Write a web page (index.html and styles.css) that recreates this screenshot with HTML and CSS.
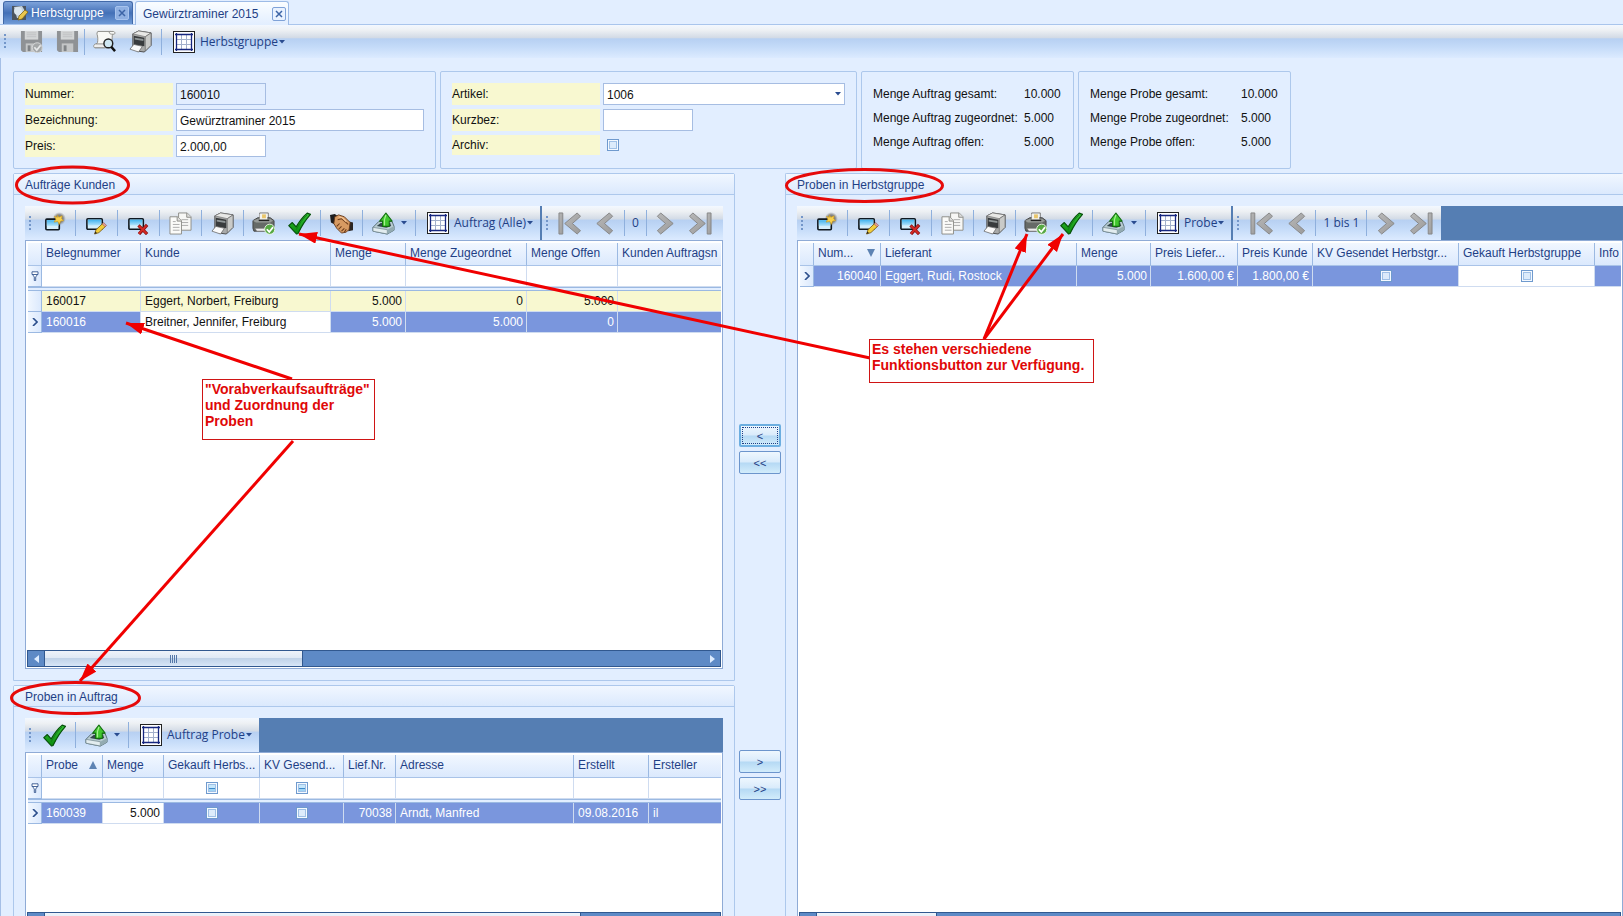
FILE: index.html
```html
<!DOCTYPE html>
<html lang="de">
<head>
<meta charset="utf-8">
<title>Herbstgruppe</title>
<link rel="stylesheet" href="styles.css">
</head>
<body>
<svg class="sprite" aria-hidden="true">
  <defs>
    <linearGradient id="gGreen" x1="0" y1="0" x2="0" y2="1"><stop offset="0" stop-color="#35c435"/><stop offset="1" stop-color="#0a8a0e"/></linearGradient>
    <linearGradient id="gWin" x1="0" y1="0" x2="0" y2="1"><stop offset="0" stop-color="#3fb2ee"/><stop offset="1" stop-color="#b4e4fb"/></linearGradient>
    <linearGradient id="gGrey" x1="0" y1="0" x2="1" y2="1"><stop offset="0" stop-color="#b8b8b8"/><stop offset="1" stop-color="#9b9b9b"/></linearGradient>
    <radialGradient id="gGlow"><stop offset="0" stop-color="#555"/><stop offset=".6" stop-color="#777" stop-opacity=".8"/><stop offset="1" stop-color="#999" stop-opacity="0"/></radialGradient>
    <marker id="head" markerUnits="userSpaceOnUse" markerWidth="20" markerHeight="14" refX="18" refY="6" orient="auto"><path d="M0 0L18 6L0 12Z" fill="#f00000"/></marker>
  </defs>
  <symbol id="i-new" viewBox="0 0 24 24"><circle cx="17" cy="7" r="7" fill="url(#gGlow)"/><rect x="3" y="7.500" width="14" height="11" rx="1" fill="#d4effc" stroke="#101820" stroke-width="1.700"/><path d="M4 8.500h12v6H4z" fill="url(#gWin)"/><path d="M15 3l1.500 2.500L20 4l-.5 3 2 2-3 .5L17 13l-1.500-3-4 .500 2-3-1.500-3 3 1z" fill="#f7d04d" stroke="#c99a26" stroke-width=".7"/></symbol>
  <symbol id="i-edit" viewBox="0 0 24 24"><rect x="2" y="7" width="16" height="11" rx="1" fill="#d4effc" stroke="#101820" stroke-width="1.700"/><path d="M3 8h14v6H3z" fill="url(#gWin)"/><path d="M10 23l1.500-4.500 7.500-7 3 3-7.500 7z" fill="#f2ce3a" stroke="#7c5b10" stroke-width=".9"/><path d="M18 12.500l1.500-1.500 3 3-1.500 1.500z" fill="#e0a09a" stroke="#844" stroke-width=".5"/><path d="M10 23l.8-2.600 1.700 1.600z" fill="#222"/></symbol>
  <symbol id="i-del" viewBox="0 0 24 24"><rect x="2" y="7" width="15" height="11" rx="1" fill="#d4effc" stroke="#101820" stroke-width="1.700"/><path d="M3 8h13v6H3z" fill="url(#gWin)"/><path d="M12 14l9 9M21 13.500l-8.500 9.500" stroke="#8a1111" stroke-width="3.400"/><path d="M12.500 14.500l8 8M20.500 14l-8 8.500" stroke="#d42a25" stroke-width="2"/></symbol>
  <symbol id="i-copy" viewBox="0 0 24 24"><path d="M10 1h9l4 4v14H10z" fill="#f7f7f5" stroke="#8d8d88"/><path d="M18.500 1v4.500H23" fill="#ddd" stroke="#8d8d88"/><path d="M13 8h7M13 11h7M13 14h7" stroke="#aaa"/><path d="M1 5h8l4 4v14H1z" fill="#fbfbf9" stroke="#8d8d88"/><path d="M8.500 5v4.500H13" fill="#ddd" stroke="#8d8d88"/><path d="M4 10h3M4 13h7M4 16h7M4 19h7" stroke="#aaa"/></symbol>
  <symbol id="i-print" viewBox="0 0 24 24"><path d="M4 4l6-3 13 2v13l-7 7-7-1-5-3z" fill="#a9aaa9" stroke="#4a4a4a"/><path d="M4 4l6-3 13 2-6 4z" fill="#e8e8e6" stroke="#777" stroke-width=".7"/><path d="M17 7l6-4v13l-6 6z" fill="#c9cac8" stroke="#666" stroke-width=".7"/><path d="M5 6l11 2v9L5 15z" fill="#383b3d"/><path d="M6 8l9 1.500v2L6 10z" fill="#8f9697"/><path d="M5 15l9 2-4 6-9-3z" fill="#fafafa" stroke="#666" stroke-width=".8"/></symbol>
  <symbol id="i-pcheck" viewBox="0 0 24 24"><path d="M8 1h9v9H8z" fill="#f3f3ee" stroke="#777"/><path d="M10.500 2.500h4v4h-4z" fill="#e9c66b"/><path d="M1 9l5-3h13l4 3v9l-6 2H2l-1-3z" fill="#666a67" stroke="#444"/><path d="M1 9l5-2h13l3 2-3 2H4z" fill="#979b98"/><path d="M8 2h8v6H8z" fill="#f3f3ee"/><path d="M10.500 2.500h4v4h-4z" fill="#e9c66b"/><path d="M7 8h11v1.500H7z" fill="#222"/><path d="M3 17h13l-2 3H5z" fill="#ededed" stroke="#666" stroke-width=".6"/><circle cx="18.500" cy="18" r="5.300" fill="#57a844" stroke="#e8f5e3"/><path d="M15.500 18l2.500 2.800 4-5" fill="none" stroke="#fff" stroke-width="1.800"/></symbol>
  <symbol id="i-check" viewBox="0 0 24 24"><path d="M.8 14.200L4.500 11l4 4.500C12 9.500 15.500 5 20 1.200l3.500 1.300C18.500 8 14 15 10.500 22.500L9 23Z" fill="url(#gGreen)" stroke="#06500a" stroke-width="1.200" stroke-linejoin="round"/><path d="M8.500 18.500C12 12 15.500 7 20 3" fill="none" stroke="#0d7012" stroke-width=".8"/></symbol>
  <symbol id="i-hand" viewBox="0 0 24 24"><path d="M0 3l5-1 4 3-4 8-4-2z" fill="#1c1c1e"/><path d="M20 10l4 1v8l-5 1z" fill="#2b2523"/><path d="M5 5l4-2 6 2 6 6-1 7-3 3-5 1-5-5-3-5z" fill="#d79a62" stroke="#5f3416" stroke-width=".9"/><path d="M8 8l4-1 7 6M7 15l3-3M9 18l3-3M12 20l3-3M15 21l2-3" fill="none" stroke="#6b3a18" stroke-width="1.100"/><path d="M9 5l4 1 4 4" stroke="#f4c698" fill="none" stroke-width="1.300"/></symbol>
  <symbol id="i-export" viewBox="0 0 24 24"><path d="M1 16l6-6h14l2 5v4l-7 4-15-3z" fill="#b9ccd2" stroke="#556c73"/><path d="M1 16l15 2.500V23L1 20z" fill="#e2ecef" stroke="#6b8189" stroke-width=".7"/><path d="M16 18.500l7-4V19l-7 4z" fill="#93abb2"/><path d="M5 14.500l4-3h10l1 3-5 2z" fill="#33464c"/><path d="M11 15V9.500H8L14.500 1 21 9.500h-3V15z" fill="#40c62e" stroke="#136c10" stroke-width="1.100" stroke-linejoin="round"/><path d="M13 14V8l1.500-5" stroke="#a4f08e" fill="none" stroke-width="1.300"/></symbol>
  <symbol id="i-grid" viewBox="0 0 22 22"><rect x=".5" y=".5" width="21" height="21" fill="#fff" stroke="#222"/><path d="M8.500 3v16M13.500 3v16M3 8.500h16M3 13.500h16" stroke="#a3b0cb"/><path d="M3.500 2v18M18.500 2v18M2 3.500h18M2 18.500h18" stroke="#16267f" stroke-width="1.300"/></symbol>
  <symbol id="i-preview" viewBox="0 0 24 24"><path d="M5 1.500h16c2 0 3 3 0 3-1 0-1 2-1 5v9H2c-2 0-1.500-4 1-4 2 0 2-2 2-6C5 5 3 4 5 1.500z" fill="#f8f8f5" stroke="#8c8c88"/><path d="M18 1.500c-2 1-1 3 3 3" fill="none" stroke="#8c8c88"/><path d="M2 18.500h10c2-1 1-4-1-4H3" fill="#eee" stroke="#8c8c88"/><circle cx="16" cy="14" r="4.600" fill="#cfe7f2" stroke="#222" stroke-width="1.500"/><path d="M19 17.500l4 4.500" stroke="#111" stroke-width="2.600"/></symbol>
  <symbol id="i-save" viewBox="0 0 24 24"><path d="M1 1h22v22H3l-2-2z" fill="#8f9295"/><path d="M5 1h14v9H5z" fill="#d4d6d7"/><path d="M7 3h10M7 5h10M7 7h10" stroke="#bfc1c2"/><path d="M6 14h12v9H6z" fill="#c4c6c7"/><path d="M8 16h3v6H8z" fill="#808386"/></symbol>
  <symbol id="i-scheck" viewBox="0 0 24 24"><use href="#i-save"/><circle cx="18" cy="18.500" r="5.200" fill="#a4a7a8" stroke="#d5d7d8"/><path d="M15 18l2.500 3 4-5" fill="none" stroke="#e6e8e9" stroke-width="1.700"/></symbol>
  <symbol id="i-first" viewBox="0 0 24 24"><g fill="url(#gGrey)" stroke="#868686" stroke-linejoin="round"><path d="M1 1h4v22H1z"/><path d="M20 1l3.500 3.500L15 12l8.500 7.500L20 23 7 12z"/></g></symbol>
  <symbol id="i-prev" viewBox="0 0 24 24"><path d="M17 1l3.500 3.500L12 12l8.500 7.500L17 23 4 12z" fill="url(#gGrey)" stroke="#868686" stroke-linejoin="round"/></symbol>
  <symbol id="i-next" viewBox="0 0 24 24"><path d="M7 1L3.500 4.500 12 12l-8.500 7.500L7 23l13-11z" fill="url(#gGrey)" stroke="#868686" stroke-linejoin="round"/></symbol>
  <symbol id="i-last" viewBox="0 0 24 24"><g fill="url(#gGrey)" stroke="#868686" stroke-linejoin="round"><path d="M19 1h4v22h-4z"/><path d="M4 1L.5 4.500 9 12 .5 19.500 4 23l13-11z"/></g></symbol>
  <symbol id="i-funnel" viewBox="0 0 8 10"><path d="M1 .8h6v2.700H1zM1.500 3.500L3.300 6v3.500h1.400V6l1.800-2.500" fill="#fff" stroke="#34568f" stroke-width=".9"/></symbol>
  <symbol id="i-caret" viewBox="0 0 6 4"><path d="M0 0h6L3 3.500z" fill="#2a4c90"/></symbol>
  <symbol id="i-row" viewBox="0 0 6 8"><path d="M1 0l4 4-4 4" fill="none" stroke="#2c4f8c" stroke-width="1.600"/></symbol>
  <symbol id="i-x" viewBox="0 0 8 8"><path d="M1 1l6 6M7 1L1 7" stroke="#3c64a6" stroke-width="1.500"/></symbol>
  <symbol id="i-doc" viewBox="0 0 16 16"><path d="M0 1h14v14H0z" fill="#4b5560"/><path d="M2 2l8-1 3 5-2 7H5z" fill="#c5d2dc"/><circle cx="6" cy="6" r="4" fill="#dce7ee"/><path d="M6 15l1-4 6-6 3 2-6 7z" fill="#eac64d" stroke="#806515" stroke-width=".8"/></symbol>
</svg>

<div class="page">
  <nav class="tabs">
    <div class="tab tab-dark"><svg class="tab-icon"><use href="#i-doc"/></svg><span>Herbstgruppe</span><button class="close" aria-label="Herbstgruppe schließen"><svg><use href="#i-x"/></svg></button></div>
    <div class="tab tab-light"><span>Gewürztraminer 2015</span><button class="close" aria-label="Gewürztraminer schließen"><svg><use href="#i-x"/></svg></button></div>
  </nav>
  <div class="toolbar toolbar-main">
    <i class="grip"></i>
    <button class="tool tool-near" aria-label="Speichern und schließen"><svg class="icon"><use href="#i-scheck"/></svg></button>
    <button class="tool tool-near" aria-label="Speichern"><svg class="icon"><use href="#i-save"/></svg></button>
    <i class="sep"></i>
    <button class="tool tool-near" aria-label="Vorschau"><svg class="icon"><use href="#i-preview"/></svg></button>
    <button class="tool tool-check" aria-label="Drucken"><svg class="icon"><use href="#i-print"/></svg></button>
    <i class="sep"></i>
    <button class="tool tool-text"><svg class="icon-grid"><use href="#i-grid"/></svg><span>Herbstgruppe</span><svg class="caret"><use href="#i-caret"/></svg></button>
  </div>

  <main class="content">
    <div class="groups">
      <section class="group form-group group-first">
        <div class="field"><label for="nummer">Nummer:</label><input id="nummer" class="short readonly" value="160010" readonly></div>
        <div class="field"><label for="bez">Bezeichnung:</label><input id="bez" class="long" value="Gewürztraminer 2015"></div>
        <div class="field"><label for="preis">Preis:</label><input id="preis" class="short" value="2.000,00"></div>
      </section>
      <section class="group form-group group-second">
        <div class="field"><label for="artikel">Artikel:</label><div class="combo"><select id="artikel"><option>1006</option></select><svg class="caret"><use href="#i-caret"/></svg></div></div>
        <div class="field"><label for="kurz">Kurzbez:</label><input id="kurz" class="short"></div>
        <div class="field field-check"><label for="archiv">Archiv:</label><input id="archiv" type="checkbox" class="check"></div>
      </section>
      <section class="group sums">
        <span>Menge Auftrag gesamt:</span><span>10.000</span>
        <span>Menge Auftrag zugeordnet:</span><span>5.000</span>
        <span>Menge Auftrag offen:</span><span>5.000</span>
      </section>
      <section class="group sums">
        <span>Menge Probe gesamt:</span><span>10.000</span>
        <span>Menge Probe zugeordnet:</span><span>5.000</span>
        <span>Menge Probe offen:</span><span>5.000</span>
      </section>
    </div>

    <div class="workspace">
      <div class="column">
        <section class="panel upper">
          <h2>Aufträge Kunden</h2>
          <div class="panel-body">
            <div class="toolbar-row">
              <div class="toolbar">
                <i class="grip"></i>
                <button class="tool" aria-label="Neu"><svg class="icon"><use href="#i-new"/></svg></button><i class="sep"></i>
                <button class="tool" aria-label="Bearbeiten"><svg class="icon"><use href="#i-edit"/></svg></button><i class="sep"></i>
                <button class="tool" aria-label="Löschen"><svg class="icon"><use href="#i-del"/></svg></button><i class="sep"></i>
                <button class="tool" aria-label="Kopieren"><svg class="icon"><use href="#i-copy"/></svg></button><i class="sep"></i>
                <button class="tool" aria-label="Drucken"><svg class="icon"><use href="#i-print"/></svg></button><i class="sep"></i>
                <button class="tool tool-near" aria-label="Druck bestätigen"><svg class="icon"><use href="#i-pcheck"/></svg></button>
                <button class="tool tool-check" aria-label="Bestätigen"><svg class="icon"><use href="#i-check"/></svg></button><i class="sep"></i>
                <button class="tool" aria-label="Vereinbaren"><svg class="icon"><use href="#i-hand"/></svg></button><i class="sep"></i>
                <button class="tool tool-drop" aria-label="Exportieren"><svg class="icon"><use href="#i-export"/></svg><svg class="caret"><use href="#i-caret"/></svg></button><i class="sep"></i>
                <button class="tool tool-text"><svg class="icon-grid"><use href="#i-grid"/></svg><span>Auftrag (Alle)</span><svg class="caret"><use href="#i-caret"/></svg></button>
              </div>
              <div class="toolbar pager stretch">
                <i class="grip"></i>
                <button class="tool tool-end" aria-label="Anfang"><svg class="icon"><use href="#i-first"/></svg></button>
                <button class="tool tool-step" aria-label="Zurück"><svg class="icon"><use href="#i-prev"/></svg></button>
                <i class="sep"></i><span class="pos">0</span><i class="sep"></i>
                <button class="tool tool-step" aria-label="Weiter"><svg class="icon"><use href="#i-next"/></svg></button>
                <button class="tool tool-end" aria-label="Ende"><svg class="icon"><use href="#i-last"/></svg></button>
              </div>
            </div>
            <div class="grid">
              <table>
                <colgroup><col class="w14"><col class="w99"><col class="w190"><col class="w75"><col class="w121"><col class="w91"><col></colgroup>
                <thead><tr><th></th><th>Belegnummer</th><th>Kunde</th><th>Menge</th><th>Menge Zugeordnet</th><th>Menge Offen</th><th>Kunden Auftragsn</th></tr></thead>
                <tbody>
                  <tr class="filter"><td class="ind"><svg class="funnel"><use href="#i-funnel"/></svg></td><td></td><td></td><td></td><td></td><td></td><td></td></tr>
                  <tr class="split"><td colspan="7"></td></tr>
                  <tr class="even"><td class="ind"></td><td>160017</td><td>Eggert, Norbert, Freiburg</td><td class="num">5.000</td><td class="num">0</td><td class="num">5.000</td><td></td></tr>
                  <tr class="sel"><td class="ind"><svg class="rowmark"><use href="#i-row"/></svg></td><td>160016</td><td class="focus">Breitner, Jennifer, Freiburg</td><td class="num">5.000</td><td class="num">5.000</td><td class="num">0</td><td></td></tr>
                </tbody>
              </table>
              <div class="scroll"><span class="sb sb-left"></span><span class="thumb thumb-a"><i></i></span><span class="sb sb-right"></span></div>
            </div>
          </div>
        </section>

        <section class="panel lower">
          <h2>Proben in Auftrag</h2>
          <div class="panel-body">
            <div class="toolbar-row">
              <div class="toolbar">
                <i class="grip"></i>
                <button class="tool" aria-label="Bestätigen"><svg class="icon"><use href="#i-check"/></svg></button><i class="sep"></i>
                <button class="tool tool-drop" aria-label="Exportieren"><svg class="icon"><use href="#i-export"/></svg><svg class="caret"><use href="#i-caret"/></svg></button><i class="sep"></i>
                <button class="tool tool-text"><svg class="icon-grid"><use href="#i-grid"/></svg><span>Auftrag Probe</span><svg class="caret"><use href="#i-caret"/></svg></button>
              </div>
            </div>
            <div class="grid">
              <table>
                <colgroup><col class="w14"><col class="w61"><col class="w61"><col class="w96"><col class="w84"><col class="w52"><col class="w178"><col class="w75"><col></colgroup>
                <thead><tr><th></th><th><span class="sort">Probe<svg><path d="M0 8L4 0l4 8z"/></svg></span></th><th>Menge</th><th>Gekauft Herbs...</th><th>KV Gesend...</th><th>Lief.Nr.</th><th>Adresse</th><th>Erstellt</th><th>Ersteller</th></tr></thead>
                <tbody>
                  <tr class="filter"><td class="ind"><svg class="funnel"><use href="#i-funnel"/></svg></td><td></td><td></td><td class="mid"><input type="checkbox" class="check mixed" aria-label="Filter Gekauft"></td><td class="mid"><input type="checkbox" class="check mixed" aria-label="Filter KV Gesendet"></td><td></td><td></td><td></td><td></td></tr>
                  <tr class="split"><td colspan="9"></td></tr>
                  <tr class="sel"><td class="ind"><svg class="rowmark"><use href="#i-row"/></svg></td><td>160039</td><td class="num focus">5.000</td><td class="mid"><input type="checkbox" class="check" aria-label="Gekauft"></td><td class="mid"><input type="checkbox" class="check" aria-label="KV Gesendet"></td><td class="num">70038</td><td>Arndt, Manfred</td><td>09.08.2016</td><td>il</td></tr>
                </tbody>
              </table>
              <div class="scroll"><span class="sb sb-left"></span><span class="thumb thumb-b"><i></i></span><span class="sb sb-right"></span></div>
            </div>
          </div>
        </section>
      </div>

      <div class="column">
        <div class="move-group upper"><button class="move active">&lt;</button><button class="move">&lt;&lt;</button></div>
        <div class="move-group lower"><button class="move">&gt;</button><button class="move">&gt;&gt;</button></div>
      </div>

      <section class="panel panel-right">
        <h2>Proben in Herbstgruppe</h2>
        <div class="panel-body">
          <div class="toolbar-row">
            <div class="toolbar">
              <i class="grip"></i>
              <button class="tool" aria-label="Neu"><svg class="icon"><use href="#i-new"/></svg></button><i class="sep"></i>
              <button class="tool" aria-label="Bearbeiten"><svg class="icon"><use href="#i-edit"/></svg></button><i class="sep"></i>
              <button class="tool" aria-label="Löschen"><svg class="icon"><use href="#i-del"/></svg></button><i class="sep"></i>
              <button class="tool" aria-label="Kopieren"><svg class="icon"><use href="#i-copy"/></svg></button><i class="sep"></i>
              <button class="tool" aria-label="Drucken"><svg class="icon"><use href="#i-print"/></svg></button><i class="sep"></i>
              <button class="tool tool-near" aria-label="Druck bestätigen"><svg class="icon"><use href="#i-pcheck"/></svg></button>
              <button class="tool tool-check" aria-label="Bestätigen"><svg class="icon"><use href="#i-check"/></svg></button><i class="sep"></i>
              <button class="tool tool-drop" aria-label="Exportieren"><svg class="icon"><use href="#i-export"/></svg><svg class="caret"><use href="#i-caret"/></svg></button><i class="sep"></i>
              <button class="tool tool-text"><svg class="icon-grid"><use href="#i-grid"/></svg><span>Probe</span><svg class="caret"><use href="#i-caret"/></svg></button>
            </div>
            <div class="toolbar pager">
              <i class="grip"></i>
              <button class="tool tool-end" aria-label="Anfang"><svg class="icon"><use href="#i-first"/></svg></button>
              <button class="tool tool-step" aria-label="Zurück"><svg class="icon"><use href="#i-prev"/></svg></button>
              <i class="sep"></i><span class="pos">1 bis 1</span><i class="sep"></i>
              <button class="tool tool-step" aria-label="Weiter"><svg class="icon"><use href="#i-next"/></svg></button>
              <button class="tool tool-end" aria-label="Ende"><svg class="icon"><use href="#i-last"/></svg></button>
            </div>
          </div>
          <div class="grid">
            <table>
              <colgroup><col class="w14"><col class="w67"><col class="w196"><col class="w74"><col class="w87"><col class="w75"><col class="w146"><col class="w136"><col></colgroup>
              <thead><tr><th></th><th><span class="sort">Num...<svg><path d="M0 0h8L4 8z"/></svg></span></th><th>Lieferant</th><th>Menge</th><th>Preis Liefer...</th><th>Preis Kunde</th><th>KV Gesendet Herbstgr...</th><th>Gekauft Herbstgruppe</th><th>Info</th></tr></thead>
              <tbody>
                <tr class="sel"><td class="ind"><svg class="rowmark"><use href="#i-row"/></svg></td><td class="num">160040</td><td>Eggert, Rudi, Rostock</td><td class="num">5.000</td><td class="num">1.600,00 €</td><td class="num">1.800,00 €</td><td class="mid"><input type="checkbox" class="check" aria-label="KV Gesendet Herbstgruppe"></td><td class="mid focus"><input type="checkbox" class="check" aria-label="Gekauft Herbstgruppe"></td><td></td></tr>
              </tbody>
            </table>
            <div class="scroll"><span class="sb sb-left"></span><span class="thumb thumb-c"><i></i></span></div>
          </div>
        </div>
      </section>
    </div>
  </main>

  <div class="notes">
    <svg class="notes-lines" width="1100" height="730" fill="none" stroke="#e60a0a" stroke-width="3">
      <ellipse cx="72.500" cy="185" rx="56" ry="18"/>
      <ellipse cx="864.500" cy="185.500" rx="78" ry="16"/>
      <ellipse cx="75.500" cy="698" rx="64" ry="15.500"/>
      <g stroke="#f00000">
        <path d="M870 358L299 234" marker-end="url(#head)"/>
        <path d="M292 379L126 323" marker-end="url(#head)"/>
        <path d="M293 441L80 681" marker-end="url(#head)"/>
        <path d="M984 339L1027 234" marker-end="url(#head)"/>
        <path d="M984 339L1063 234" marker-end="url(#head)"/>
      </g>
    </svg>
    <p class="note note-a">"Vorabverkaufsaufträge"<br>und Zuordnung der<br>Proben</p>
    <p class="note note-b">Es stehen verschiedene<br>Funktionsbutton zur Verfügung.</p>
  </div>
</div>
</body>
</html>
```
FILE: styles.css
```css
* { box-sizing: border-box; }
body { margin: 0; height: 100vh; overflow: hidden; background: #e2eeff; font: 12px/16px "Liberation Sans", Arial, sans-serif; color: #111; }
button, input, select { font: inherit; color: inherit; margin: 0; border-radius: 0; }
button { padding: 0; border: 0; background: none; }
svg { display: block; flex: none; }
.sprite { position: absolute; width: 0; height: 0; }
.page { position: relative; height: calc(100vh + 27px); display: flex; flex-direction: column; }

/* document tabs */
.tabs { display: flex; align-items: flex-end; gap: 2px; height: 25px; padding-left: 3px; flex: none; border-bottom: 1px solid #a9c5ec; background: #e2eeff; }
.tab { display: flex; align-items: center; height: 23px; border-radius: 3px 3px 0 0; border: 1px solid #9dbbe6; border-bottom: 0; }
.tab-dark { width: 130px; padding: 0 3px 0 8px; gap: 3px; color: #fff; border-color: #4169a8; background: linear-gradient(#7ea3da, #4370b7 50%, #4c79be 60%, #6f9ad6); }
.tab-light { width: 154px; height: 24px; padding: 0 2px 0 7px; color: #1f3f85; background: linear-gradient(#fafdff, #e2eeff); margin-bottom: -1px; }
.tab-icon { width: 16px; height: 16px; }
.close { margin-left: auto; width: 14px; height: 14px; border: 1px solid #7fa2d8; border-radius: 2px; display: grid; place-items: center; background: #e9f2ff; }
.tab-dark .close { background: #8fb0e2; border-color: #a8c4ee; }
.close svg { width: 8px; height: 8px; }

/* toolbars */
.toolbar { display: flex; align-items: center; height: 34px; flex: none; font: 12px/16px "Open Sans", "Noto Sans", sans-serif; color: #1f3f85; background: linear-gradient(#f3f8ff, #eef1f4 15%, #d3dbe6 38%, #b7d0f2 42%, #c3daf8 65%, #dcebff); }
.toolbar-main { height: 33px; }
.toolbar-main .grip { margin-right: 5px; }
.toolbar-row { display: flex; background: #557eb3; flex: none; }
.grip { flex: none; width: 3px; height: 15px; margin: 0 2px 0 4px; background: radial-gradient(circle at 1px 1px, #7396c9 1px, transparent 1px) 0 0 / 3px 4px; }
.sep { flex: none; width: 1px; height: 26px; background: #8fb0dd; }
.tool { flex: none; width: 41px; height: 30px; display: flex; align-items: center; justify-content: center; }
.tool-near { width: 36px; padding-left: 3px; }
.tool-check { width: 40px; padding-right: 2px; }
.tool-end { width: 32px; }
.tool-step { width: 38px; }
.tool-drop { width: 52px; gap: 6px; }
.tool-text { width: auto; padding: 0 7px 0 11px; gap: 5px; }
.tool-text .caret { margin-left: -4px; }
.icon { width: 23px; height: 23px; }
.icon-grid { width: 22px; height: 22px; }
.caret { width: 6px; height: 4px; }
.pager { border-left: 2px solid #557eb3; padding-right: 4px; }
.pager .grip { margin-right: 5px; }
.stretch { flex: 1; min-width: 0; }
.pos { padding: 0 7px; }

/* master data */
.content { flex: 1; min-height: 0; display: flex; flex-direction: column; gap: 4px; padding: 13px 0 0 12px; border-left: 1px solid #a5bfe6; }
.groups { display: flex; gap: 4px; height: 98px; flex: none; }
.group { border: 1px solid #adc8ec; border-radius: 2px; }
.form-group { display: flex; flex-direction: column; gap: 4px; padding: 11px; }
.group-first { width: 423px; }
.group-second { width: 417px; }
.field { display: flex; align-items: center; gap: 3px; height: 22px; }
.field label { width: 148px; height: 22px; line-height: 23px; background: #f8f8d0; }
.field-check { height: 20px; gap: 7px; }
.field-check label { height: 20px; line-height: 20px; }
.field input:not(.check), .combo select { height: 22px; padding: 1px 3px 0; border: 1px solid #a6bde2; background: #fff; outline: 0; }
.field .short { width: 90px; }
.field .long { flex: 1; min-width: 0; }
.field input.readonly { background: #e2eeff; }
.combo { position: relative; flex: 1; }
.combo select { width: 100%; appearance: none; display: block; }
.combo .caret { position: absolute; right: 4px; top: 9px; pointer-events: none; }
.sums { display: grid; grid-template-columns: 151px auto; grid-auto-rows: 24px; align-items: center; padding: 10px 11px; width: 213px; white-space: nowrap; }
.check { appearance: none; flex: none; width: 12px; height: 12px; border: 1px solid #6f9ace; background: #dcebfb; box-shadow: inset 0 0 0 1px #f4f9ff, inset 0 0 0 2px #9fc0e6; }
.check.mixed { background: linear-gradient(#c4e6fb 5px, #3f8ac9 5px, #3f8ac9 6px, #9ed4f5 6px); }

/* panels */
.workspace { flex: 1; min-height: 0; display: grid; grid-template-columns: 722px 50px minmax(0, 1fr); }
.column { display: flex; flex-direction: column; gap: 4px; min-height: 0; }
.upper { flex: 509 1 0; min-height: 0; }
.lower { flex: 257 1 0; min-height: 0; }
.panel { display: flex; flex-direction: column; border: 1px solid #adc8ec; border-radius: 2px 2px 0 0; }
.panel h2 { margin: 0; flex: none; height: 21px; padding: 0 11px; font: inherit; line-height: 22px; color: #1f3f85; border-bottom: 1px solid #adc8ec; background: linear-gradient(#f1f7ff, #dbe9fd); }
.panel-body { flex: 1; min-height: 0; display: flex; flex-direction: column; padding: 11px; }
.panel-right { border-right: 0; }
.panel-right .panel-body { padding-right: 0; }
.move-group { display: flex; flex-direction: column; align-items: center; gap: 4px; }
.move-group::before { content: ""; flex: none; height: 247px; }
.move-group.lower::before { height: 60px; }
.move { width: 42px; height: 23px; border: 1px solid #6c95cc; border-radius: 2px; font-size: 11px; color: #1f3f85; background: linear-gradient(#eef7fe, #d9ebfb 48%, #b5d9f4 52%, #d2ecfb); flex: none; }
.move.active { border: 2px solid #6caee0; outline: 1px dotted #1f3f85; outline-offset: -4px; }

/* data grids */
.grid { flex: 1; min-height: 0; display: flex; flex-direction: column; justify-content: space-between; background: #fff; border: 1px solid #8fabd6; padding: 1px; }
.grid table { margin: 1px 0 0 1px; width: calc(100% - 1px); }
table { table-layout: fixed; border-collapse: separate; border-spacing: 0; }
tr { height: 21px; }
th { height: 23px; padding: 0 0 2px 4px; text-align: left; font-weight: normal; color: #1f3f85; white-space: nowrap; overflow: hidden; border-right: 1px solid #9bb9e2; border-bottom: 1px solid #a9c3e8; background: linear-gradient(#f1f7ff, #dbe9fd); }
td { height: 21px; padding: 0 4px; white-space: nowrap; overflow: hidden; border-right: 1px solid #cfdcf0; border-bottom: 1px solid #cfdcf0; line-height: 18px; }
th:last-child, td:last-child { border-right: 0; }
td.ind { padding: 0 3px; background: linear-gradient(90deg, #f1f7ff, #dbe9fd); border-color: #9bb9e2; }
.split td { height: 4px; padding: 0; border-top: 1px solid #9bb9e2; border-bottom: 1px solid #9bb9e2; background: #e2eeff; line-height: 0; }
.split { height: 4px; }
.even td:not(.ind) { background: #f8f8d0; }
.sel td:not(.ind) { background: #7a96dd; color: #fff; }
.sel td.focus:not(.ind) { background: #fff; color: #111; }
.num { text-align: right; padding-right: 3px; }
.mid { text-align: center; }
.mid .check { display: block; margin: 0 auto; }
.funnel { width: 8px; height: 10px; }
.rowmark { width: 6px; height: 8px; margin-left: 1px; }
.sort { display: flex; justify-content: space-between; align-items: center; padding-right: 5px; }
.sort svg { width: 8px; height: 8px; fill: #5d83b3; }
.w14 { width: 14px; } .w52 { width: 52px; } .w61 { width: 61px; } .w67 { width: 67px; }
.w74 { width: 74px; } .w75 { width: 75px; } .w84 { width: 84px; } .w87 { width: 87px; }
.w91 { width: 91px; } .w96 { width: 96px; } .w99 { width: 99px; } .w121 { width: 121px; }
.w136 { width: 136px; } .w146 { width: 146px; } .w178 { width: 178px; } .w190 { width: 190px; } .w196 { width: 196px; }
.scroll { display: flex; height: 17px; flex: none; border: 1px solid #31588f; background: #5e8ac6; }
.sb { width: 16px; display: grid; place-items: center; }
.sb::before { content: ""; border: 4px solid transparent; }
.sb-left::before { border-right: 5px solid #dcebff; border-left: 0; }
.sb-right::before { border-left: 5px solid #dcebff; border-right: 0; }
.sb-right { margin-left: auto; }
.thumb { display: grid; place-items: center; border: 1px solid #31588f; border-width: 0 1px; background: linear-gradient(#eef3fa, #dfe9f5 45%, #c0d2e8 50%, #d8e6f7); }
.thumb i { width: 8px; height: 8px; background: repeating-linear-gradient(90deg, #5477a8 0 1px, transparent 1px 2px); }
.thumb-a { width: 259px; }
.thumb-b { width: 537px; }
.thumb-c { width: 121px; }

/* callouts drawn over the window */
.notes { position: absolute; inset: 0; pointer-events: none; }
.notes-lines { position: absolute; left: 0; top: 0; }
.note { position: absolute; margin: 0; padding: 1px 2px; border: 1px solid #cf1414; background: #fff; color: #e00808; font-weight: bold; font-size: 14px; line-height: 16px; white-space: nowrap; }
.note-a { left: 202px; top: 379px; width: 173px; height: 61px; }
.note-b { left: 869px; top: 339px; width: 225px; height: 44px; }
```
